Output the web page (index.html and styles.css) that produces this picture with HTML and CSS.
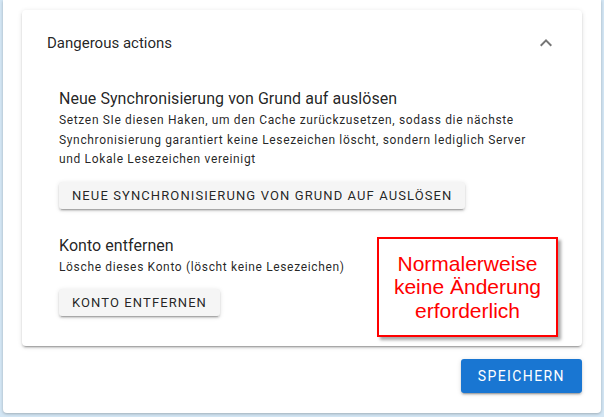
FILE: index.html
```html
<!DOCTYPE html>
<html lang="de">
<head>
<meta charset="utf-8">
<link rel="stylesheet" href="styles.css">
</head>
<body>
<div class="sheet">
  <section class="panel">
    <header class="panel-head">
      <span class="panel-title">Dangerous actions</span>
      <svg class="chevron" width="24" height="24" viewBox="0 0 24 24"><path d="M7.41 15.41L12 10.83l4.59 4.58L18 14l-6-6-6 6z" fill="#757575"/></svg>
    </header>
    <div class="panel-body">
      <div class="action">
        <h3 class="action-title">Neue Synchronisierung von Grund auf auslösen</h3>
        <p class="action-desc">Setzen SIe diesen Haken, um den Cache zurückzusetzen, sodass die nächste Synchronisierung garantiert keine Lesezeichen löscht, sondern lediglich Server und Lokale Lesezeichen vereinigt</p>
        <button class="btn">Neue Synchronisierung von Grund auf auslösen</button>
      </div>
      <div class="action">
        <h3 class="action-title">Konto entfernen</h3>
        <p class="action-desc">Lösche dieses Konto (löscht keine Lesezeichen)</p>
        <button class="btn">Konto entfernen</button>
      </div>
    </div>
    <div class="note">Normalerweise<br>keine Änderung<br>erforderlich</div>
  </section>
  <div class="footer">
    <button class="btn btn-primary">Speichern</button>
  </div>
</div>
</body>
</html>
```
FILE: styles.css
```css
html, body {
  margin: 0;
  padding: 0;
}
body {
  background: #d3e6f4;
  font-family: Roboto, "Noto Sans", sans-serif;
  color: rgba(0,0,0,0.87);
  width: 604px;
  height: 417px;
  overflow: hidden;
}
.sheet {
  margin: 0 3px;
  height: 413px;
  background: #fff;
  border-radius: 0 0 4px 4px;
  box-shadow: 0 1px 3px rgba(0,0,0,0.25);
  padding: 10px 19px 0 19px;
  box-sizing: border-box;
}
.panel {
  position: relative;
  background: #fff;
  border-radius: 4px;
  box-shadow: 0 3px 1px -2px rgba(0,0,0,.2), 0 2px 2px 0 rgba(0,0,0,.14), 0 1px 5px 0 rgba(0,0,0,.12);
  height: 336px;
  box-sizing: border-box;
}
.panel-head {
  display: flex;
  align-items: center;
  justify-content: space-between;
  height: 66px;
  padding: 0 24px 0 25px;
}
.panel-title {
  font-size: 15px;
  color: rgba(0,0,0,0.87);
}
.chevron {
  display: block;
}
.panel-body {
  padding: 12px 37px 0 37px;
  display: flex;
  flex-direction: column;
  gap: 26px;
}
.action-title {
  margin: 0;
  font-size: 16px;
  font-weight: 400;
  letter-spacing: 0.05px;
  line-height: 22px;
  color: rgba(0,0,0,0.87);
}
.action-desc {
  margin: 1px 0 12px 0;
  font-size: 12px;
  letter-spacing: 0.65px;
  line-height: 19.5px;
  color: rgba(0,0,0,0.87);
}
.btn {
  font-family: Roboto, "Noto Sans", sans-serif;
  font-size: 13px;
  font-weight: 400;
  letter-spacing: 1.1px;
  text-transform: uppercase;
  height: 27px;
  padding: 0 13px;
  border: none;
  border-radius: 3px;
  background: #f5f5f5;
  color: rgba(0,0,0,0.87);
  box-shadow: 0 3px 1px -2px rgba(0,0,0,.2), 0 2px 2px 0 rgba(0,0,0,.14), 0 1px 5px 0 rgba(0,0,0,.12);
  cursor: pointer;
}
.note {
  position: absolute;
  left: 355px;
  top: 227px;
  width: 177px;
  height: 96px;
  border: 2px solid #ff0000;
  box-shadow: 3px 3px 3px rgba(0,0,0,0.35);
  background: #fff;
  color: #ff0000;
  font-family: "Liberation Sans", Arial, sans-serif;
  font-size: 21px;
  line-height: 23.5px;
  text-align: center;
  display: flex;
  align-items: center;
  justify-content: center;
}
.footer {
  display: flex;
  justify-content: flex-end;
  padding-top: 13px;
}
.btn-primary {
  background: #1976d2;
  color: #fff;
  height: 34px;
  padding: 0 17px;
  font-size: 14px;
  letter-spacing: 1.4px;
}
```
